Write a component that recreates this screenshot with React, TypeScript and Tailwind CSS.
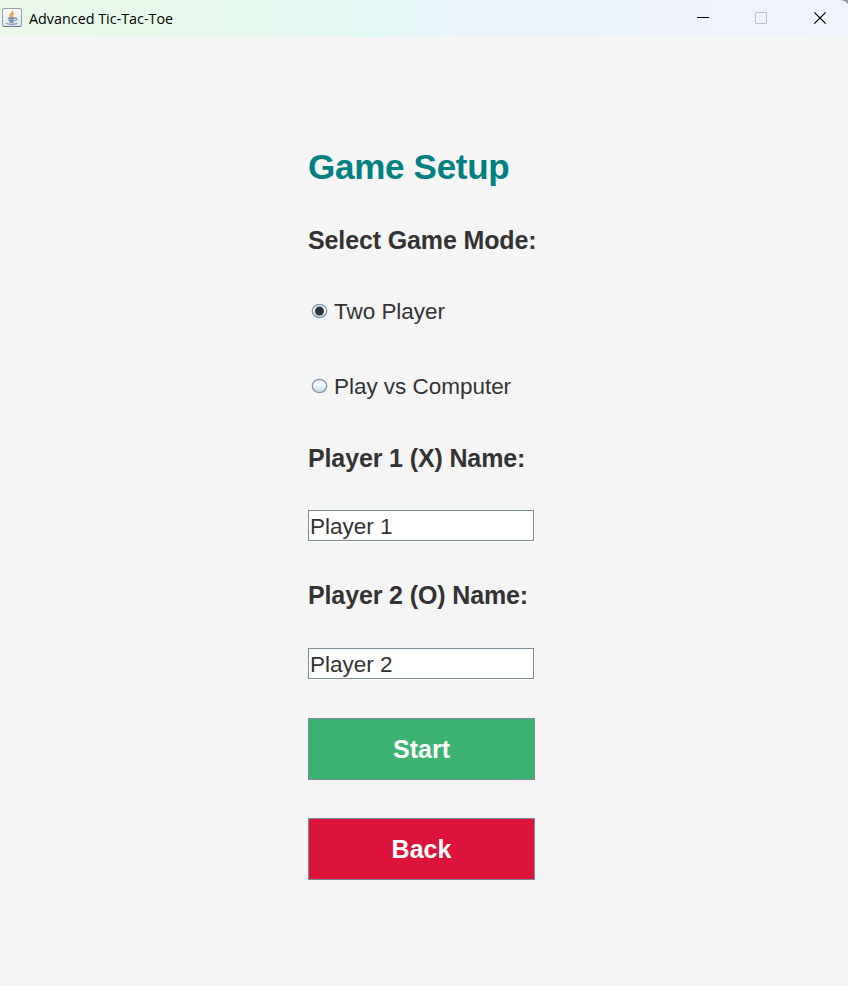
import React from "react";

function JavaIcon() {
  return (
    <svg width="20" height="20" viewBox="0 0 20 20" className="shrink-0">
      <defs>
        <linearGradient id="tile" x1="0" y1="0" x2="0" y2="1">
          <stop offset="0" stopColor="#fdfdfd" />
          <stop offset="1" stopColor="#dfe3ea" />
        </linearGradient>
      </defs>
      <rect x="0.5" y="0.5" width="19" height="18" rx="1.5" fill="url(#tile)" stroke="#929cac" />
      <path d="M1.5 18.5h17" stroke="#66758c" />
      <path d="M10.8 2.8c.6 2-2.8 2.8-2.8 4.7 0 1 .9 1.5 1.4 2.3M12.3 5.4c-1.6.7-2.6 1.5-2 2.6.4.8.3 1.3-.2 2" fill="none" stroke="#ee9a4d" strokeWidth="1.5" />
      <path d="M5.8 10.3h7.4M6.6 12.2h5.6M7.3 13.9h4.4" stroke="#6585a8" strokeWidth="1.5" />
      <path d="M13 10.2c2.6-.5 2.5 1.9-.2 2.6M4.3 15.2c1.5 1.5 9 1.5 10.8 0" fill="none" stroke="#7e9ab8" strokeWidth="1.2" />
    </svg>
  );
}

function TitleBar() {
  return (
    <header className="relative flex h-[37px] items-start overflow-hidden bg-[linear-gradient(90deg,#eaf8ea_0%,#e5f8ec_28%,#e2f8f5_45%,#e9f5fa_53%,#eaf3fa_65%,#eef3fa_76%,#eff3fb_100%)]">
      <div className="flex items-center gap-[7px] pt-2 pl-[2px]">
        <JavaIcon />
        <span className="origin-left scale-x-[0.956] font-['Open_Sans','Noto_Sans',sans-serif] text-[15px] leading-5 whitespace-nowrap text-black">
          Advanced Tic-Tac-Toe
        </span>
      </div>
      <div className="ml-auto flex items-center gap-[46px] pt-3 pr-[22px]">
        <svg width="12" height="12" className="relative -left-px">
          <path d="M0 5.5h12" stroke="#000" />
        </svg>
        <svg width="12" height="12" className="relative -left-px">
          <rect x="0.5" y="0.5" width="11" height="11" rx="0.5" fill="none" stroke="#bcc0c8" />
        </svg>
        <svg width="12" height="12" className="overflow-visible">
          <path d="M.3.3l11.4 11.4M11.7.3L.3 11.7" stroke="#000" strokeWidth="1.2" />
        </svg>
      </div>
      <svg width="8" height="5" className="absolute top-0 right-0">
        <path d="M1 0Q6 1 8 4V0z" fill="#8f9bb8" />
      </svg>
    </header>
  );
}

function Radio({ label, checked }: { label: string; checked?: boolean }) {
  return (
    <label className="flex h-7 items-center pl-[3px]">
      <svg width="17" height="16" viewBox="0 0 17 16" className="mr-[6px] shrink-0">
        <defs>
          <linearGradient id="dial" x1="0" y1="0" x2="0" y2="1">
            <stop offset="0" stopColor="#e3edf6" />
            <stop offset="0.35" stopColor="#fbfdff" />
            <stop offset="1" stopColor="#bdd3e8" />
          </linearGradient>
        </defs>
        <ellipse cx="8.5" cy="8" rx="7.2" ry="6.6" fill="url(#dial)" stroke="#8494a8" strokeWidth="1.3" />
        {checked && <circle cx="8.5" cy="8" r="4.5" fill="#303238" />}
      </svg>
      <span className="pt-[2px] text-[22.5px] leading-7 tracking-[-0.03px] whitespace-nowrap text-[#333]">{label}</span>
    </label>
  );
}

function Label({ text }: { text: string }) {
  return <div className="h-[30px] text-[25px] leading-[30px] font-bold tracking-[-0.13px] whitespace-nowrap text-[#333]">{text}</div>;
}

function Field({ value }: { value: string }) {
  return (
    <input
      defaultValue={value}
      className="block h-[31px] w-[226px] border border-[#7a8a99] bg-white p-0 pt-[2px] pl-px text-[22.5px] leading-[27px] text-[#333] shadow-[1px_1px_0_#fff] outline-none"
    />
  );
}

const buttonBase = "h-[62px] w-[227px] border border-[#7a8a99] pt-[2px] text-[25px] font-bold text-white";

export default function App() {
  return (
    <div className="h-[986px] w-[848px] overflow-hidden bg-[#f5f5f5] font-['Liberation_Sans',Arial,sans-serif]">
      <TitleBar />
      <main className="ml-[308px] flex w-[232px] flex-col pt-[110px]">
        <h1 className="h-10 text-[35px] leading-10 font-bold tracking-[-0.28px] whitespace-nowrap text-[#008080]">Game Setup</h1>
        <div className="mt-[38px]"><Label text="Select Game Mode:" /></div>
        <div className="mt-[42px] flex flex-col gap-[47px]">
          <Radio label="Two Player" checked />
          <Radio label="Play vs Computer" />
        </div>
        <div className="mt-[43px]"><Label text="Player 1 (X) Name:" /></div>
        <div className="mt-[37px]"><Field value="Player 1" /></div>
        <div className="mt-[39px]"><Label text="Player 2 (O) Name:" /></div>
        <div className="mt-[38px]"><Field value="Player 2" /></div>
        <div className="mt-[39px] flex flex-col gap-[38px]">
          <button className={`${buttonBase} bg-[#3cb371]`}>Start</button>
          <button className={`${buttonBase} bg-[#dc143c]`}>Back</button>
        </div>
      </main>
    </div>
  );
}
